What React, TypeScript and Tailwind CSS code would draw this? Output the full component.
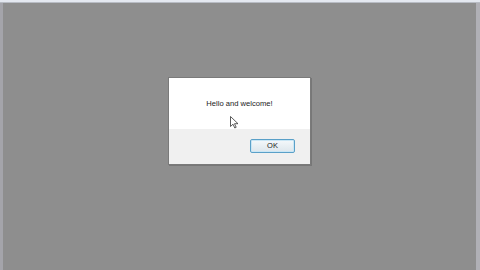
import React from "react";

export default function App() {
  return (
    <div className="w-[480px] h-[270px] bg-[#8e8e8e] flex flex-col overflow-hidden" style={{ fontFamily: "'Liberation Sans', Arial, sans-serif" }}>
      {/* top window edge */}
      <div className="h-[3px] bg-[#e4e8f0] border-b border-[#b8bcc4]" />
      <div className="flex-1 flex">
        <div className="w-[3px] bg-[#a4a4aa]" />
        <div className="flex-1 relative">
          <div className="absolute left-[165px] top-[74px] w-[143px] h-[88px] bg-white border border-[#7a7a7a] flex flex-col shadow-[1px_1px_0_#777]">
            <div className="h-[51px] flex items-center justify-center">
              <span className="text-[7.6px] text-[#1a1a1a]">Hello and welcome!</span>
            </div>
            <div className="flex-1 bg-[#f0f0f0] flex items-start justify-end pt-[10px] pr-[15px]">
              <button className="w-[45px] h-[14px] border border-[#5aa0c8] rounded-[2px] bg-gradient-to-b from-[#f4f8fb] to-[#dde6ec] flex items-center justify-center shadow-[inset_0_0_0_1px_#c9e6f5]">
                <span className="text-[7.5px] text-[#222]">OK</span>
              </button>
            </div>
          </div>
          {/* mouse cursor */}
          <svg className="absolute left-[227px] top-[113px]" width="9" height="13" viewBox="0 0 9 13">
            <path d="M0.5 0.5 L0.5 10.5 L3 8.2 L4.8 12 L6.2 11.3 L4.5 7.7 L8 7.7 Z" fill="white" stroke="#333" strokeWidth="0.8" strokeLinejoin="round" />
          </svg>
        </div>
        <div className="w-[4px] bg-[#b0b0b6]" />
      </div>
    </div>
  );
}
